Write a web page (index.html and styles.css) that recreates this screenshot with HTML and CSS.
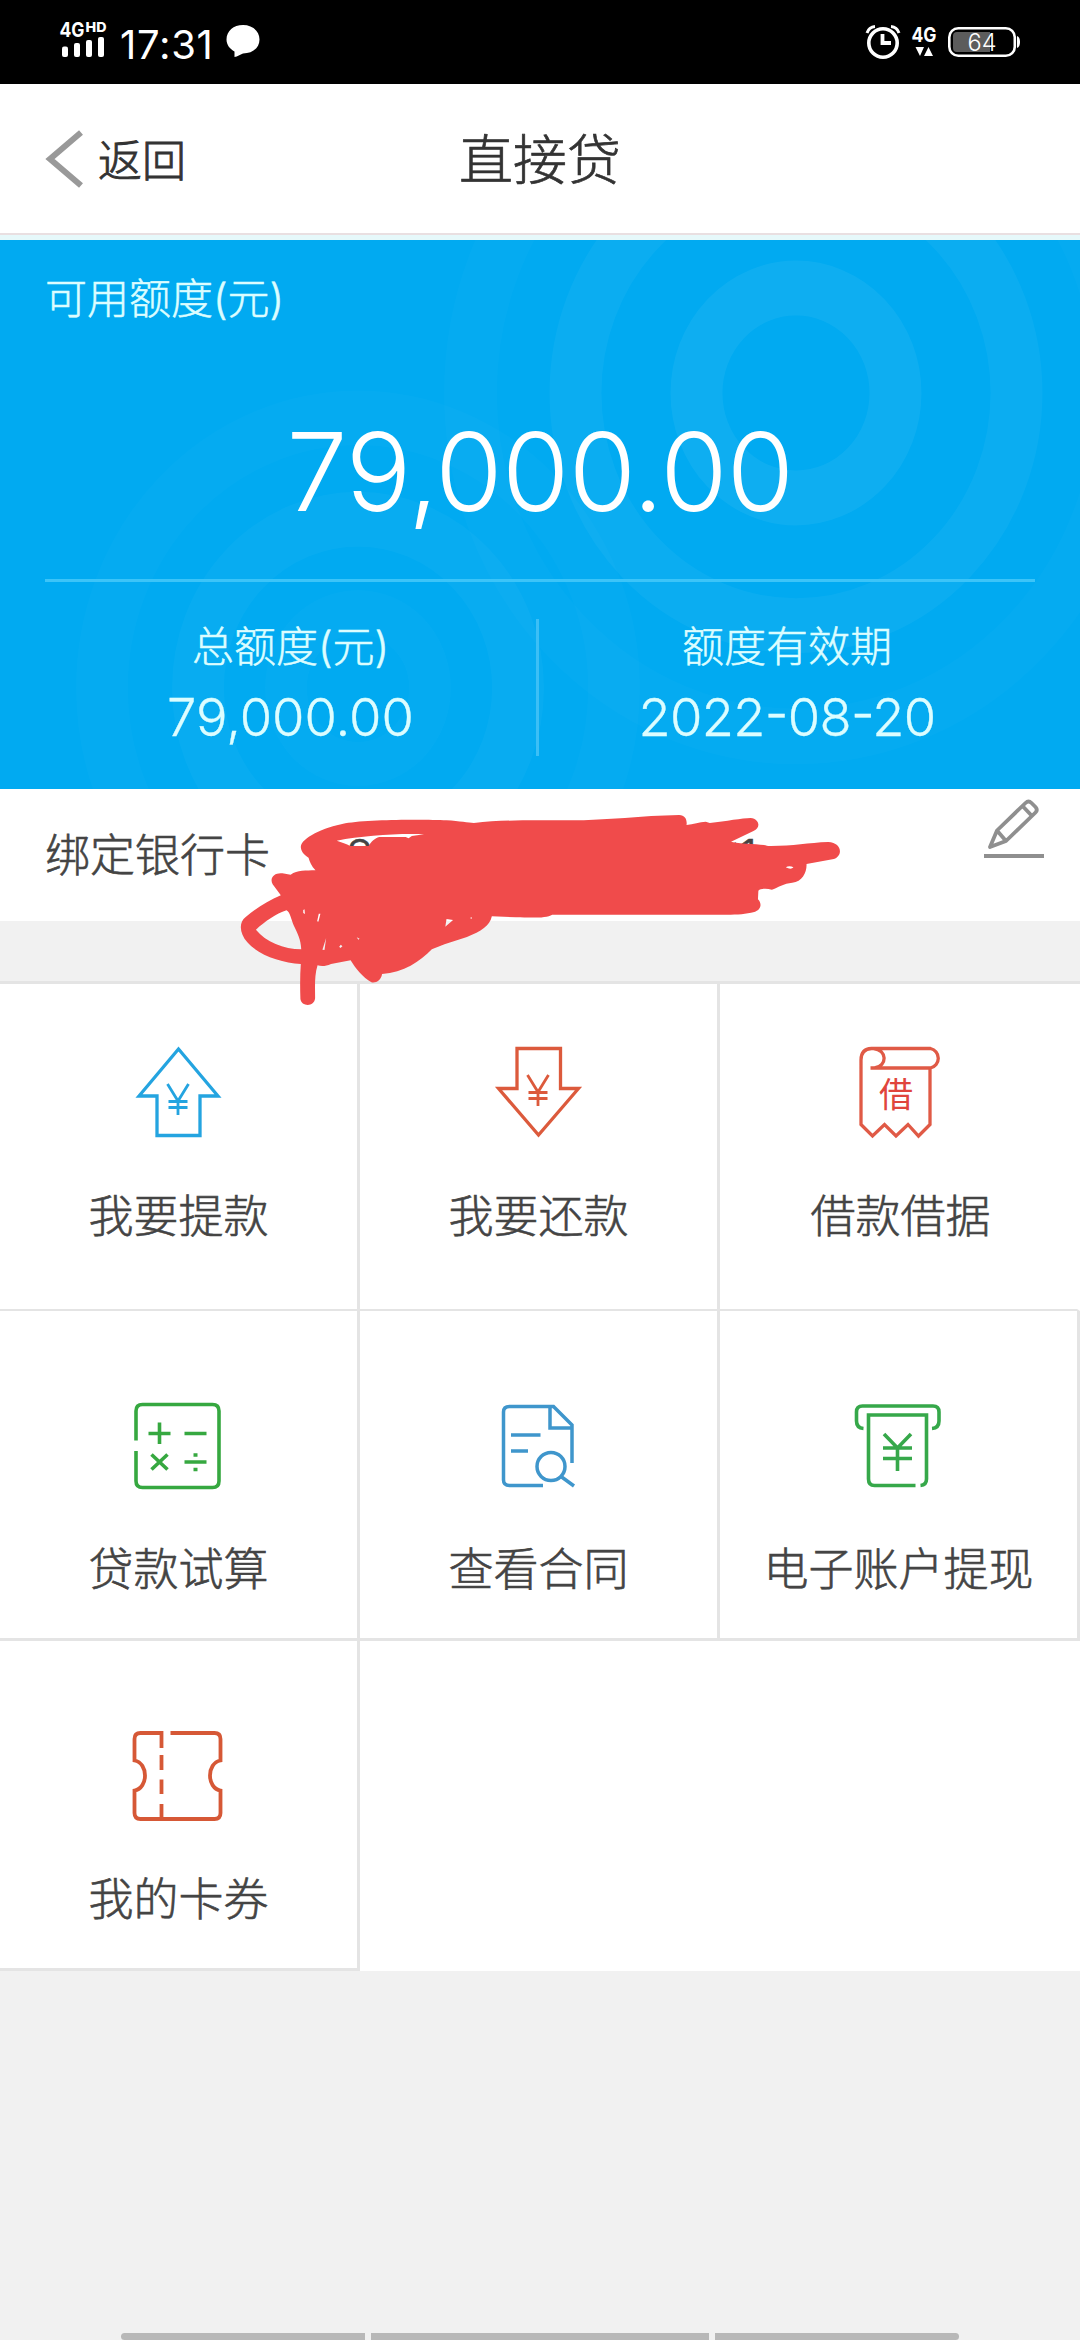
FILE: index.html
```html
<!DOCTYPE html>
<html lang="zh-CN">
<head>
<meta charset="utf-8">
<title>直接贷</title>
<link rel="stylesheet" href="styles.css">
</head>
<body>
<div class="screen">
  <div class="status">
    <svg class="signal" width="52" height="48" viewBox="57 16 52 48">
      <text x="59.500" y="37" font-size="20" font-weight="700" textLength="25" lengthAdjust="spacingAndGlyphs">4G</text>
      <text x="85.500" y="32" font-size="13.500" font-weight="800" textLength="21" lengthAdjust="spacingAndGlyphs">HD</text>
      <rect x="62" y="46.500" width="6" height="10.500" rx="2"/>
      <rect x="74" y="43" width="6" height="14" rx="2"/>
      <rect x="86" y="40" width="6" height="17" rx="2"/>
      <rect x="98" y="37" width="6" height="20" rx="2"/>
    </svg>
    <span class="time">17:31</span>
    <svg class="bubble" width="34" height="34" viewBox="0 0 34 34"><path d="M17 0C26.500 0 33.500 6 33.500 14.500S26.500 28.500 17 28.500C14 29.500 11.500 31.500 8.500 32V26.500C4 24 .5 20 .5 14.500C.5 6 7.500 0 17 0Z"/></svg>
    <span class="spacer"></span>
    <svg width="36" height="36" viewBox="865 24 36 36">
      <g fill="none" stroke="#fff"><circle cx="883" cy="43" r="14.200" stroke-width="3.600"/><path d="M882.500 34V43H891" stroke-width="3.800"/><path d="M867 33Q869 27 875 26.500M899 33Q897 27 891 26.500" stroke-width="3"/></g>
    </svg>
    <svg class="data" width="28" height="48" viewBox="910 18 28 48">
      <text x="911.500" y="42" font-size="20.500" font-weight="700" textLength="25" lengthAdjust="spacingAndGlyphs">4G</text>
      <path d="M915.500 47H924L920 56ZM924 56H933L928.500 47Z"/>
    </svg>
    <svg class="battery" width="74" height="32" viewBox="947 26 74 32">
      <path fill="#5c5c5c" d="M957 32H990V52H957Q953 52 953 48V36Q953 32 957 32Z"/>
      <rect x="949.300" y="28.300" width="65.500" height="27.500" rx="9" fill="none" stroke="#fff" stroke-width="2.600"/>
      <path d="M1017 36Q1020 37 1020 42T1017 48Z"/>
      <text x="967.500" y="51" font-size="24" textLength="29" lengthAdjust="spacingAndGlyphs">64</text>
    </svg>
  </div>

  <header class="header">
    <a class="back"><svg width="40" height="62" viewBox="0 0 40 62"><path d="M36 4.500L5 31L36 57.500" fill="none" stroke="#999" stroke-width="6"/></svg><span>返回</span></a>
    <h1 class="title">直接贷</h1>
  </header>

  <section class="hero">
    <svg class="rings" width="1080" height="549" viewBox="0 240 1080 549" fill="none" stroke="#fff">
      <g transform="translate(796 393) scale(1 1.055)">
        <circle r="99.500" stroke-width="52" opacity=".055"/><circle r="220.500" stroke-width="52" opacity=".045"/><circle r="325.500" stroke-width="53" opacity=".02"/>
      </g>
      <g transform="translate(358 688) scale(1 1.055)">
        <circle r="72" stroke-width="42" opacity=".018"/><circle r="160" stroke-width="52" opacity=".032"/><circle r="256" stroke-width="52" opacity=".018"/>
      </g>
    </svg>
    <div class="hero-label">可用额度(元)</div>
    <div class="amount">79,000.00</div>
    <div class="stats">
      <div class="stat"><span class="stat-label">总额度(元)</span><span class="stat-value">79,000.00</span></div>
      <div class="stat stat-right"><span class="stat-label">额度有效期</span><span class="stat-value date">2022<i>-</i>08<i>-</i>20</span></div>
    </div>
  </section>

  <section class="card">
    <span>绑定银行卡</span>
    <span class="number"><span>8</span><span>*1</span></span>
    <svg class="pencil" width="62" height="64" viewBox="983 797 62 64" fill="none" stroke="#8f8f8f" stroke-width="3.800" stroke-linejoin="round">
      <path d="M990 847L997 830.500L1025.500 803Q1028.500 800 1031.500 803L1035.500 807Q1038 810 1035.500 812.500L1006 841ZM997 830.500L1006 841M1022.500 806L1032 816"/><path d="M984 856H1044" stroke-width="4"/>
    </svg>
    <svg class="scribble" width="640" height="240" viewBox="0 0 1568 720" preserveAspectRatio="none">
      <path fill="#f04b4b" fill-rule="evenodd" d="M234 271C224 258 220 246 217 233C205 224 198 212 198 200C200 174 252 143 307 130C365 118 500 118 555 121C588 123 608 129 622 129C690 119 760 121 855 121C955 121 1030 107 1125 105C1140 105 1145 120 1143 135C1160 132 1175 126 1190 125L1200 129C1240 124 1280 114 1300 114C1323 117 1325 145 1307 153L1252 185C1275 193 1325 190 1343 198C1400 199 1440 188 1490 186C1524 188 1527 227 1504 237L1437 252C1438 276 1427 306 1402 308C1382 310 1366 323 1352 329C1340 325 1325 325 1319 332L1318 358C1330 373 1325 394 1301 398C1275 405 1250 404 1200 404H814C800 415 765 413 725 412L666 409C661 438 640 454 605 471L550 493L519 508C490 545 450 578 397 582C395 600 383 610 371 607C350 593 332 565 320 541L272 552C258 560 247 559 239 556C231 586 233 625 233 655C231 682 199 680 197 657C196 620 196 585 198 552C150 548 95 526 67 487C48 460 45 428 63 411C85 387 117 363 149 346L129 313C120 292 135 277 153 280L173 284C190 270 210 272 234 271ZM286 182C350 168 430 160 500 163L470 168L462 175L455 171H390C380 174 370 185 364 198H319C310 190 298 188 286 182ZM88 449C110 425 137 401 163 391C172 397 174 418 181 437C190 460 198 478 199 508C156 507 112 486 88 449ZM204 390L207 388L208 402L204 399ZM242 401H246L241 425L238 424ZM260 474L256 510L251 509ZM296 494L300 499L295 504L292 500ZM335 472L342 476L339 479ZM555 417L571 420L552 440ZM612 414L617 412V416ZM1386 262Q1395 256 1405 262Q1399 270 1386 262Z"/>
    </svg>
  </section>

  <main class="grid">
    <a class="cell"><svg width="100" height="100" viewBox="128.500 1042 100 100" fill="none" stroke="#24a4e0" stroke-width="3.300">
      <path d="M178 1049L217.500 1096H199.500V1135.500H156.500V1096H138.500Z"/><path d="M167 1084L177.500 1101L188 1084M177.500 1100V1115M168 1101.500H187M168 1107.500H187" stroke-width="2.800"/></svg><span>我要提款</span></a>
    <a class="cell"><svg width="100" height="100" viewBox="488.500 1042 100 100" fill="none" stroke="#dc5a3c" stroke-width="3.300">
      <path d="M516.500 1048.500H560V1088.500H578L538 1135L498 1088.500H516.500Z"/><path d="M527 1075L537.500 1092L548 1075M537.500 1091V1106M528 1092.500H547M528 1098.500H547" stroke-width="2.800"/></svg><span>我要还款</span></a>
    <a class="cell"><svg width="100" height="100" viewBox="848.500 1042 100 100" fill="none" stroke="#e05a46" stroke-width="3.300">
      <path d="M870 1068H930A10 10 0 0 0 930 1048.500H871Q860.500 1049 860.500 1060V1124.500L872 1136L884 1124.500L895.500 1136L907.500 1124.500L918 1136L929.500 1124.500V1069M873 1048.500C887 1050 887 1066 874 1068"/>
      <text class="jie" x="895.500" y="1107" font-size="34" text-anchor="middle" fill="#e0453c" stroke="none">借</text></svg><span>借款借据</span></a>
    <a class="cell"><svg width="100" height="100" viewBox="128.500 1396 100 100" fill="none" stroke="#36a840" stroke-width="3.600">
      <path d="M135.500 1440.500V1411Q135.500 1404.500 142 1404.500H212Q218.500 1404.500 218.500 1411V1481Q218.500 1487.500 212 1487.500H142Q135.500 1487.500 135.500 1481V1451M148 1433.500H170M159 1422.500V1444M184 1433.500H206M151 1454.500L167 1469.500M167 1454.500L151 1469.500M184 1462H206M193 1455H197M193 1469.500H197"/></svg><span>贷款试算</span></a>
    <a class="cell"><svg width="100" height="100" viewBox="488.500 1396 100 100" fill="none" stroke="#3f96cc" stroke-width="3.500">
      <path d="M542.500 1485.500H509Q503 1485.500 503 1480V1412Q503 1406.500 509 1406.500H553L571.500 1425V1463M549.500 1407V1428H571.500M510.500 1435H540M510.500 1451H527.500M560.500 1476.500L573.500 1486"/><circle cx="550.500" cy="1466.500" r="14"/></svg><span>查看合同</span></a>
    <a class="cell"><svg width="100" height="100" viewBox="848.500 1396 100 100" fill="none" stroke="#36a84a" stroke-width="3.600">
      <path d="M863 1428.500Q856 1428 856 1421V1412Q856 1406 862 1406H932.500Q938.500 1406 938.500 1412V1421Q938.500 1428 931.500 1428.500M915 1485.500H874Q868 1485.500 868 1479V1415H926V1479Q926 1485 920 1485.500M883.500 1434L897 1448L910.500 1434M882.500 1448H911.500M882.500 1458.500H911.500M897 1448V1471"/></svg><span>电子账户提现</span></a>
    <a class="cell"><svg width="100" height="100" viewBox="128.500 1726 100 100" fill="none" stroke="#d65836" stroke-width="3.800">
      <path d="M161 1748V1733H140Q134 1733 134 1739V1760.500C148 1763 148 1788 134 1790.500V1813Q134 1819 140 1819H214Q220 1819 220 1813V1790.500C206 1788 206 1763 220 1760.500V1739Q220 1733 214 1733H170M161 1755V1770M161 1779.500V1794M161 1804V1819"/></svg><span>我的卡券</span></a>
  </main>
  <nav class="gesture"><i></i><i></i><i></i></nav>
</div>
</body>
</html>
```
FILE: styles.css
```css
* { box-sizing: border-box; }
body { margin: 0; background: #f1f1f1; font-family: Inter, "Noto Sans CJK SC", sans-serif; font-weight: 300; color: #444; }
i { font-style: normal; }
svg { display: block; flex: none; }
.screen { width: 1080px; height: 2340px; overflow: hidden; display: flex; flex-direction: column; }

.status { height: 84px; flex: none; background: #000; color: #fff; display: flex; align-items: center; padding: 0 59px 0 57px; }
.status svg { fill: #fff; }
.status text { font-family: Inter, sans-serif; fill: #fff; }
.signal { margin-top: -4px; }
.time { width: 94px; margin-left: 11px; font-size: 40px; font-weight: 400; line-height: 60px; letter-spacing: 0.7px; margin-top: 5px; white-space: nowrap; }
.bubble { margin-left: 12px; }
.spacer { flex: 1; }
.data { margin-left: 9px; }
.battery { margin-left: 9px; }

.header { height: 156px; flex: none; background: #fff; border-bottom: 5px solid #e6f8fa; box-shadow: inset 0 -2px #e9dfe1; display: grid; grid-template-columns: 1fr auto 1fr; align-items: center; color: #333; padding-bottom: 2px; }
.back { display: flex; align-items: center; padding-left: 45px; font-size: 44px; line-height: 60px; }
.back span { margin-left: 13px; margin-top: 4px; font-weight: 300; -webkit-text-stroke: 0.9px; }
.title { margin: 5px 0 0; font-size: 54px; line-height: 70px; font-weight: 300; -webkit-text-stroke: 0.7px; }

.hero { position: relative; height: 549px; flex: none; background: #01aaf1; color: #dcfdff; padding: 28px 45px 0; }
.rings { position: absolute; left: 0; top: 0; }
.hero-label, .amount, .stats { position: relative; }
.hero-label { font-size: 42px; line-height: 62px; height: 60px; -webkit-text-stroke: 0.5px; }
.amount { height: 251px; line-height: 286px; font-size: 109px; text-align: center; color: #fff; letter-spacing: -0.6px; }
.stats { border-top: 3px solid #3cc4f8; display: grid; grid-template-columns: 494px 1fr; padding-top: 37px; }
.stat { height: 137px; border-right: 3px solid #3cbff6; display: flex; flex-direction: column; align-items: center; }
.stat-right { border: 0; }
.stat-label { font-size: 42px; line-height: 60px; margin-top: -2px; -webkit-text-stroke: 0.5px; }
.stat-value { font-size: 52.5px; line-height: 60px; margin-top: 10px; letter-spacing: 0; -webkit-text-stroke: 0.3px; }
.date { letter-spacing: -0.7px; }
.date i { position: relative; top: -4px; }

.card { position: relative; z-index: 1; height: 132px; flex: none; background: #fff; display: flex; align-items: flex-start; padding-left: 45px; font-size: 45px; line-height: 60px; }
.card > span { margin-top: 37px; -webkit-text-stroke: 0.6px; }
.number { width: 411px; margin-left: 76px; display: flex; justify-content: space-between; }
.pencil { margin: 8px 35px 0 auto; }
.scribble { position: absolute; left: 220px; top: -9px; }

.grid { margin-top: 60px; border-top: 3px solid #e4e4e4; height: 990px; flex: none; background: #fff; display: grid; grid-template-columns: repeat(3, 360px); grid-template-rows: 327px 330px 330px; }
.cell { border-right: 3px solid #e4e4e4; border-bottom: 3px solid #e4e4e4; padding-top: 85px; display: flex; flex-direction: column; align-items: center; gap: 44px; font-size: 45px; line-height: 60px; }
.cell span { -webkit-text-stroke: 0.6px; }
.cell:nth-child(-n+3) { padding-top: 58px; gap: 45px; border-bottom-width: 2px; }
.cell:nth-child(3) { border-right-color: #fff; }
.cell:nth-child(3) span { margin-left: 4px; }
.jie { font-family: "Noto Sans CJK SC", sans-serif; font-weight: 400; }

.gesture { margin-top: auto; height: 7px; display: grid; grid-template-columns: 244px 338px 244px; gap: 6px; justify-content: center; }
.gesture i { background: #b8b8b8; }
.gesture i:first-child { border-radius: 4px 0 0 4px; }
.gesture i:last-child { border-radius: 0 4px 4px 0; }
```
